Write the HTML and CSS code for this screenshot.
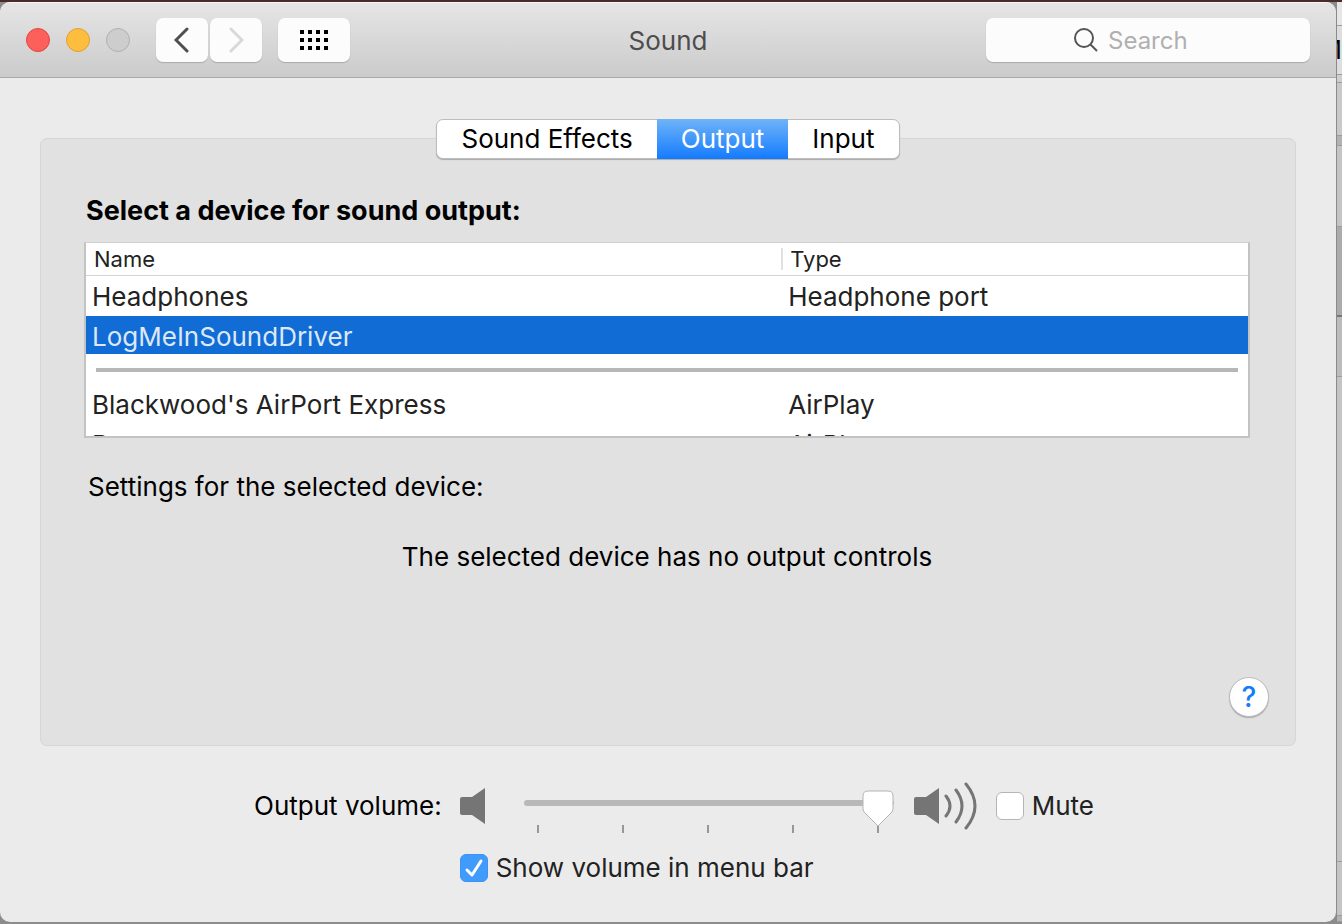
FILE: index.html
```html
<!DOCTYPE html>
<html lang="en">
<head>
    <meta charset="UTF-8">
    <meta name="viewport" content="width=device-width, initial-scale=1.0">
    <title>Sound</title>
    <link rel="stylesheet" href="styles.css">
</head>
<body>

    <main class="window">
        <header class="titlebar">
            <div class="titlebar-left">
                <div class="lights">
                    <button class="light close" aria-label="Close"></button>
                    <button class="light minimize" aria-label="Minimize"></button>
                    <button class="light zoom" aria-label="Zoom" disabled></button>
                </div>
                <div class="nav">
                    <button class="tool-button back" aria-label="Back">
                        <svg width="16" height="26" viewBox="0 0 16 26"><path d="M13 2 L2 13 L13 24" fill="none" stroke="#4f4f4f" stroke-width="3" stroke-linecap="round"/></svg>
                    </button>
                    <button class="tool-button forward" aria-label="Forward" disabled>
                        <svg width="16" height="26" viewBox="0 0 16 26"><path d="M3 2 L14 13 L3 24" fill="none" stroke="#d8d8d8" stroke-width="3" stroke-linecap="round"/></svg>
                    </button>
                </div>
                <button class="tool-button show-all" aria-label="Show All">
                    <svg width="28" height="20" viewBox="0 0 28 20"><path d="M0 2h4m4 0h4m4 0h4m4 0h4M0 10h4m4 0h4m4 0h4m4 0h4M0 18h4m4 0h4m4 0h4m4 0h4" stroke="#000" stroke-width="4"/></svg>
                </button>
            </div>
            <h1>Sound</h1>
            <label class="search">
                <svg width="24" height="24" viewBox="0 0 24 24" fill="none" stroke="#555"><circle cx="10" cy="10" r="9" stroke-width="2"/><path d="M16 16 L23 23" stroke-width="2"/></svg>
                <input type="text" placeholder="Search" aria-label="Search">
            </label>
        </header>

        <div class="content">
            <div class="tabs" role="tablist">
                <button role="tab">Sound Effects</button>
                <button role="tab" class="active" aria-selected="true">Output</button>
                <button role="tab">Input</button>
            </div>

            <section class="panel">
                <h2>Select a device for sound output:</h2>
                <div class="device-list">
                    <table>
                        <thead>
                            <tr>
                                <th class="name">Name</th>
                                <th>Type</th>
                            </tr>
                        </thead>
                        <tbody>
                            <tr>
                                <td>Headphones</td>
                                <td>Headphone port</td>
                            </tr>
                            <tr class="selected">
                                <td>LogMeInSoundDriver</td>
                                <td></td>
                            </tr>
                            <tr class="separator">
                                <td colspan="2"><hr></td>
                            </tr>
                            <tr>
                                <td>Blackwood's AirPort Express</td>
                                <td>AirPlay</td>
                            </tr>
                            <tr>
                                <td>Den</td>
                                <td>AirPlay</td>
                            </tr>
                        </tbody>
                    </table>
                </div>
                <p class="settings-label">Settings for the selected device:</p>
                <p class="no-controls">The selected device has no output controls</p>
                <button class="help" aria-label="Help">?</button>
            </section>

            <div class="volume">
                <label for="volume">Output volume:</label>
                <svg class="speaker" width="26" height="38" viewBox="0 0 26 38"><path d="M2 10H12L25 1V37L12 28H2Q0 28 0 26V12Q0 10 2 10Z" fill="#757575"/></svg>
                <div class="slider">
                    <input type="range" id="volume" min="0" max="100" value="100">
                    <div class="ticks"><i></i><i></i><i></i><i></i><i></i></div>
                </div>
                <svg class="speaker-loud" width="64" height="48" viewBox="0 0 64 48">
                    <path d="M2 15H12L25 6V42L12 33H2Q0 33 0 31V17Q0 15 2 15Z" fill="#757575"/>
                    <path d="M32 14Q40 24 32 34M42 8Q54 24 42 40M52 2Q70 24 52 46" fill="none" stroke="#757575" stroke-width="3" stroke-linecap="round"/>
                </svg>
                <label class="check"><input type="checkbox"> Mute</label>
                <label class="check menu-bar"><input type="checkbox" checked> Show volume in menu bar</label>
            </div>
        </div>
    </main>

    <!-- edge of the window behind -->
    <div class="behind">
        <div class="behind-title"></div>
        <div class="behind-menu">M</div>
        <div class="behind-gap"></div>
        <div class="behind-bar"></div>
        <div class="behind-line"></div>
        <div class="behind-head"></div>
        <div class="behind-dark"></div>
        <div class="behind-row"></div>
        <div class="behind-body"></div>
        <div class="behind-foot"></div>
    </div>

</body>
</html>
```

FILE: styles.css
```css
* {
    box-sizing: border-box;
}

body {
    font-family: Inter, "Liberation Sans", Arial, sans-serif;
    font-size: 26px;
    line-height: 32px;
    margin: 0;
    min-height: 100vh;
    display: flex;
    padding-bottom: 2px;
    border-top: 2px solid #4b2a2d;
    background-color: #8c8c8c;
    color: #000;
    overflow-x: hidden;
}

button, input {
    font: inherit;
    color: inherit;
}

button {
    border: none;
    padding: 0;
}

h1, h2, p {
    margin: 0;
}

svg {
    display: block;
}

.window {
    flex: 1;
    border-radius: 10px;
    background-color: #ebebeb;
    overflow: hidden;
}

/* Title bar */
.titlebar {
    display: grid;
    grid-template-columns: 1fr auto 1fr;
    align-items: center;
    height: 76px;
    padding: 0 26px;
    background: linear-gradient(#e6e5e6, #cccbcc);
    border-top: 1px solid #f6f6f6;
    border-bottom: 1px solid #a9a9a9;
}

.titlebar-left, .lights, .nav {
    display: flex;
    align-items: center;
}

.titlebar-left {
    gap: 16px;
}

.lights {
    gap: 16px;
    margin-right: 10px;
}

.light {
    width: 24px;
    height: 24px;
    border-radius: 50%;
    border: 1px solid #b0b0b0;
    background-color: #cdcdcd;
}

.light.close {
    background-color: #fd5f5b;
    border-color: #e24542;
}

.light.minimize {
    background-color: #fdbe40;
    border-color: #dfa036;
}

.nav {
    gap: 2px;
}

.tool-button {
    display: flex;
    align-items: center;
    justify-content: center;
    width: 52px;
    height: 44px;
    border-radius: 7px;
    background-color: #fcfcfc;
    box-shadow: 0 1px 1px #a9a9a9;
}

.show-all {
    width: 72px;
}

h1 {
    padding-top: 2px;
    font-size: 26px;
    font-weight: normal;
    color: #4d4d4d;
}

.search {
    justify-self: end;
    display: flex;
    align-items: center;
    justify-content: center;
    gap: 10px;
    width: 324px;
    height: 44px;
    border-radius: 7px;
    background-color: #fcfcfc;
    box-shadow: 0 1px 1px #a9a9a9;
}

.search input {
    width: 114px;
    padding: 2px 0 0;
    border: none;
    outline: none;
    background: none;
    font-size: 24px;
}

.search input::placeholder {
    color: #b0b0b0;
}

/* Tabs and panel */
.content {
    display: flex;
    flex-direction: column;
    padding: 41px 40px 38px;
}

.tabs {
    display: flex;
    align-self: center;
    position: relative;
    height: 40px;
    margin-bottom: -21px;
    border: 1px solid #bdbdbd;
    border-radius: 7px;
    background-color: #fff;
    box-shadow: 0 1px 1px #a9a9a9;
}

.tabs button {
    padding: 0 24px;
    background: none;
}

.tabs .active {
    margin: -1px 0;
    background: linear-gradient(#6fb3f8, #147bfe);
    color: #fff;
}

.panel {
    display: flex;
    flex-direction: column;
    padding: 56px 45px 28px 43px;
    border: 1px solid #d6d6d6;
    border-radius: 7px;
    background-color: #e1e1e1;
}

h2 {
    margin-left: 2px;
    font-size: 27px;
    font-weight: bold;
}

.device-list {
    height: 196px;
    margin-top: 15px;
    border: 2px solid #c3c3c3;
    border-top: 1px solid #d0d0d0;
    background-color: #fff;
    color: #222;
    overflow: hidden;
}

table {
    width: 100%;
    table-layout: fixed;
    border-spacing: 0;
}

th {
    height: 33px;
    padding: 0 7px;
    border-bottom: 1px solid #d4d4d4;
    font-size: 22px;
    font-weight: normal;
    line-height: 30px;
    text-align: left;
}

th.name {
    width: 60%;
    background: linear-gradient(#e0e0e0, #e0e0e0) no-repeat right center / 2px 22px;
}

td {
    height: 40px;
    padding: 2px 5px 0;
}

th:first-child {
    padding-left: 8px;
}

td:first-child {
    padding-left: 6px;
}

.selected td {
    height: 38px;
    padding-top: 4px;
    background-color: #116cd6;
    color: #dce8f8;
}

.separator td {
    height: 30px;
    padding: 2px 10px 0;
}

hr {
    height: 4px;
    margin: 0;
    border: none;
    background-color: #b7b7b7;
}

.settings-label {
    margin: 33px 0 0 4px;
}

.no-controls {
    margin-top: 38px;
    text-align: center;
}

.help {
    align-self: flex-end;
    width: 40px;
    height: 40px;
    margin: 104px -19px 0 0;
    border: 1px solid #bdbdbd;
    border-radius: 50%;
    background-color: #fff;
    box-shadow: 0 1px 1px #a9a9a9;
    color: #147bfe;
    font-size: 28px;
    font-weight: 500;
}

/* Volume */
.volume {
    display: grid;
    grid-template-columns: repeat(5, auto);
    justify-content: center;
    align-items: center;
    row-gap: 19px;
    padding: 33px 0 0 12px;
}

.speaker {
    margin: 0 38px 0 18px;
}

.slider {
    width: 370px;
    padding-top: 12px;
}

.slider input {
    display: block;
    width: 100%;
    height: 24px;
    margin: 0;
    position: relative;
    appearance: none;
    background: none;
}

.slider input::-webkit-slider-runnable-track {
    height: 6px;
    border-radius: 3px;
    background-color: #b8b8b8;
}

.slider input::-webkit-slider-thumb {
    appearance: none;
    width: 32px;
    height: 37px;
    margin-top: -10px;
    background: url("data:image/svg+xml,%3Csvg xmlns='http://www.w3.org/2000/svg' width='32' height='37'%3E%3Cpath d='M6 1H26Q31 1 31 6V19Q31 21 29 23L16 36L3 23Q1 21 1 19V6Q1 1 6 1Z' fill='white' stroke='%23b4b4b4'/%3E%3C/svg%3E") no-repeat;
}

.ticks {
    display: flex;
    justify-content: space-between;
    margin-top: 10px;
    padding: 0 15px 0 13px;
}

.ticks i {
    width: 2px;
    height: 8px;
    background-color: #979797;
}

.speaker-loud {
    margin: 0 18px 0 20px;
}

.check {
    display: flex;
    align-items: center;
    gap: 8px;
    color: #222;
}

.check input {
    appearance: none;
    width: 28px;
    height: 28px;
    margin: 0;
    border: 1px solid #b5b5b5;
    border-radius: 6px;
    background-color: #fff;
}

.check input:checked {
    border-color: #3b93f5;
    background: #409bfb url("data:image/svg+xml,%3Csvg xmlns='http://www.w3.org/2000/svg' width='26' height='26'%3E%3Cpath d='M6 15L11 20L20 6' fill='none' stroke='white' stroke-width='3' stroke-linecap='round' stroke-linejoin='round'/%3E%3C/svg%3E") no-repeat;
}

.menu-bar {
    grid-column: 2 / -1;
    margin-left: 18px;
}

/* Window behind */
.behind {
    display: flex;
    flex-direction: column;
    width: 6px;
    overflow: hidden;
    border-left: 1px solid #8a8a8a;
    background-color: #c4c4c4;
}

.behind div {
    border-bottom: 1px solid #9c9c9c;
}

.behind .behind-title {
    height: 24px;
    background-color: #e6e6e6;
}

.behind .behind-menu {
    display: flex;
    justify-content: flex-end;
    height: 49px;
    padding-top: 8px;
    background-color: #dedede;
}

.behind .behind-gap {
    height: 8px;
    background-color: #cfcfcf;
}

.behind .behind-bar {
    height: 53px;
    background-color: #c9c9c9;
}

.behind .behind-line {
    height: 10px;
    background-color: #b2b2b2;
}

.behind .behind-head {
    height: 81px;
}

.behind .behind-dark {
    height: 90px;
    border-bottom: 2px solid #777;
    background-color: #ababab;
}

.behind .behind-row {
    height: 60px;
    background-color: #bcbcbc;
}

.behind .behind-body {
    flex: 1;
}

.behind .behind-foot {
    height: 60px;
    background: linear-gradient(#c4c4c4 53px, #9c9c9c 53px, #9c9c9c 54px, #b2b2b2 54px);
}
```
